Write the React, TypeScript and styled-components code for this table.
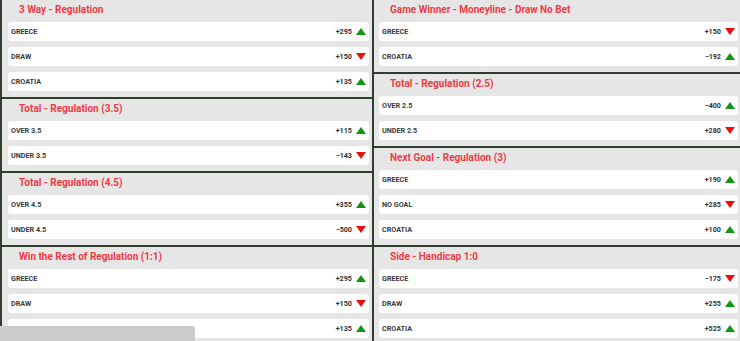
import styled, { createGlobalStyle } from 'styled-components';

const GlobalStyle = createGlobalStyle`
    html, body {
        margin: 0;
        padding: 0;
        overflow: hidden;
        background: #e6e6e6;
        font-family: Roboto, "Liberation Sans", Arial, sans-serif;
    }
`;

const Board = styled.div`
    display: grid;
    grid-template-columns: 372px 1fr;
    width: 740px;
    background: #e6e6e6;
`;

const Column = styled.div`
    display: flex;
    flex-direction: column;
    border-left: 2px solid #2f3d2c;
`;

const Market = styled.section<{ $first?: boolean; $right?: boolean }>`
    display: flex;
    flex-direction: column;
    gap: 6px;
    padding: 0 ${p => (p.$right ? '2px' : '3px')} 6px ${p => (p.$right ? '5px' : '6px')};
    border-top: ${p => (p.$first ? 'none' : '2px solid #2f3d2c')};
`;

const Title = styled.h3`
    margin: 0 0 -3px 0;
    height: 19px;
    line-height: 20px;
    padding-left: 11px;
    font-size: 10px;
    font-weight: 700;
    color: #ef3b45;
`;

const Row = styled.div`
    display: flex;
    align-items: center;
    height: 19px;
    padding: 0 3px 0 3px;
    background: #ffffff;
    border-radius: 3px;
`;

const Label = styled.span`
    flex: 1;
    font-size: 7.2px;
    font-weight: 700;
    color: #3a3a3a;
    text-transform: uppercase;
`;

const Odds = styled.span`
    font-size: 7.2px;
    font-weight: 700;
    color: #333;
    margin-right: 4px;
`;

const Arrow = styled.span<{ $up: boolean }>`
    width: 0;
    height: 0;
    border-left: 5px solid transparent;
    border-right: 5px solid transparent;
    ${p =>
        p.$up
            ? 'border-bottom: 7px solid #129512;'
            : 'border-top: 7px solid #ea1010;'}
`;

const BottomBar = styled.div`
    position: fixed;
    left: 0;
    bottom: 0;
    width: 195px;
    height: 15px;
    background: #cccccc;
    border-top-right-radius: 3px;
`;

type Pick = [string, string, boolean];
type MarketData = { title: string; picks: Pick[] };

const leftMarkets: MarketData[] = [
    { title: '3 Way - Regulation', picks: [['Greece', '+295', true], ['Draw', '+150', false], ['Croatia', '+135', true]] },
    { title: 'Total - Regulation (3.5)', picks: [['Over 3.5', '+115', true], ['Under 3.5', '\u2212143', false]] },
    { title: 'Total - Regulation (4.5)', picks: [['Over 4.5', '+355', true], ['Under 4.5', '\u2212500', false]] },
    { title: 'Win the Rest of Regulation (1:1)', picks: [['Greece', '+295', true], ['Draw', '+150', false], ['Croatia', '+135', true]] },
];

const rightMarkets: MarketData[] = [
    { title: 'Game Winner - Moneyline - Draw No Bet', picks: [['Greece', '+150', false], ['Croatia', '\u2212192', true]] },
    { title: 'Total - Regulation (2.5)', picks: [['Over 2.5', '\u2212400', true], ['Under 2.5', '+280', false]] },
    { title: 'Next Goal - Regulation (3)', picks: [['Greece', '+190', true], ['No Goal', '+285', false], ['Croatia', '+100', true]] },
    { title: 'Side - Handicap 1:0', picks: [['Greece', '\u2212175', false], ['Draw', '+255', true], ['Croatia', '+525', true]] },
];

function MarketBlock({ market, first, right }: { market: MarketData; first: boolean; right?: boolean }) {
    return (
        <Market $first={first} $right={right}>
            <Title>{market.title}</Title>
            {market.picks.map(([name, odds, up], i) => (
                <Row key={i}>
                    <Label>{name}</Label>
                    <Odds>{odds}</Odds>
                    <Arrow $up={up} />
                </Row>
            ))}
        </Market>
    );
}

export default function App(): JSX.Element {
    return (
        <>
            <GlobalStyle />
            <Board>
                <Column>
                    {leftMarkets.map((m, i) => (
                        <MarketBlock key={i} market={m} first={i === 0} />
                    ))}
                </Column>
                <Column>
                    {rightMarkets.map((m, i) => (
                        <MarketBlock key={i} market={m} first={i === 0} right />
                    ))}
                </Column>
            </Board>
            <BottomBar />
        </>
    );
}
